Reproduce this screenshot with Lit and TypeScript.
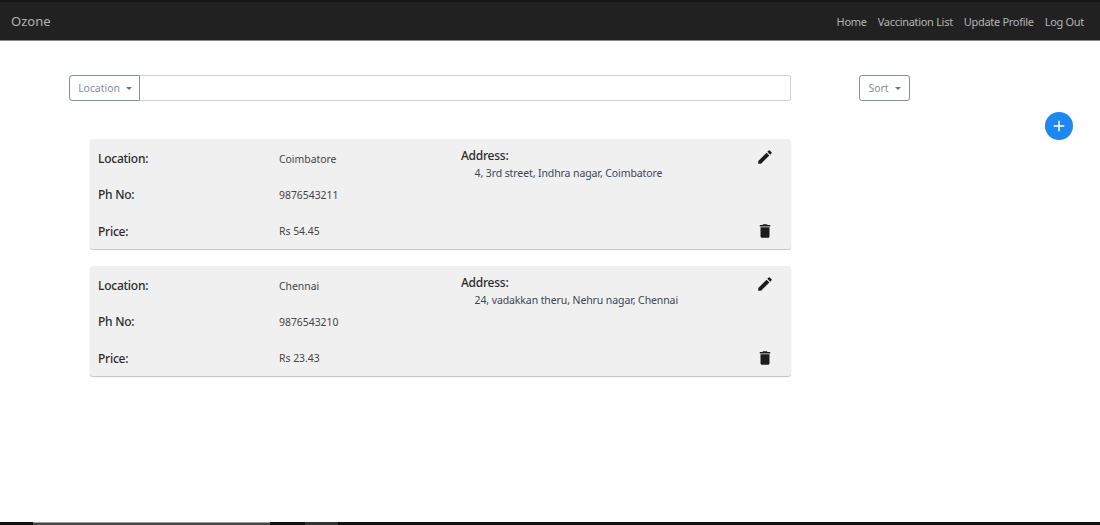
import { LitElement, html, css, svg } from "lit";
import { customElement } from "lit/decorators.js";

const caret = html`<span class="caret"></span>`;
const pencil = svg`<path d="M3 17.25V21h3.75L17.81 9.94l-3.75-3.75L3 17.25zM20.71 7.04a1 1 0 0 0 0-1.41l-2.34-2.34a1 1 0 0 0-1.41 0l-1.83 1.83 3.75 3.75 1.83-1.83z"/>`;
const trash = svg`<path d="M6 19c0 1.1.9 2 2 2h8c1.1 0 2-.9 2-2V7H6v12zM19 4h-3.5l-1-1h-5l-1 1H5v2h14V4z"/>`;

const items = [
  { location: "Coimbatore", phone: "9876543211", price: "Rs 54.45", address: "4, 3rd street, Indhra nagar, Coimbatore" },
  { location: "Chennai", phone: "9876543210", price: "Rs 23.43", address: "24, vadakkan theru, Nehru nagar, Chennai" },
];

@customElement("app-root")
export class AppRoot extends LitElement {
  static styles = css`
    :host {
      display: flex;
      flex-direction: column;
      height: 525px;
      overflow: hidden;
      background: #fff;
      font-family: "Noto Sans", "Open Sans", sans-serif;
      font-size: 11px;
      color: #343a40;
    }
    .nav {
      flex: none;
      height: 38px;
      box-sizing: content-box;
      display: flex;
      align-items: center;
      justify-content: space-between;
      padding: 0 16px 0 11px;
      background: #212121;
      border-top: 2px solid #161616;
      border-bottom: 1px solid #8a8a8a;
      color: #b4b4b4;
    }
    .brand { font-size: 13px; }
    .links { display: flex; gap: 11px; font-size: 11px; letter-spacing: -0.3px; }
    .main {
      flex: 1;
      position: relative;
      padding: 34px 0 0 69px;
    }
    .search { display: flex; width: 722px; height: 26px; }
    .drop {
      display: flex;
      align-items: center;
      justify-content: center;
      gap: 6px;
      box-sizing: border-box;
      border: 1px solid #868e96;
      height: 26px;
      font-size: 10.4px;
      color: #868e96;
      background: #fff;
    }
    .drop.loc { width: 71px; border-radius: 3px 0 0 3px; padding-left: 1px; }
    .input {
      flex: 1;
      box-sizing: border-box;
      border: 1px solid #ced4da;
      border-left: none;
      border-radius: 0 3px 3px 0;
    }
    .drop.sort { width: 51px; border-radius: 3px; margin-left: 68px; }
    .caret {
      width: 0;
      height: 0;
      border-left: 3.5px solid transparent;
      border-right: 3.5px solid transparent;
      border-top: 3.5px solid #6c757d;
    }
    .toolbar { display: flex; }
    .fab {
      position: absolute;
      left: 1045px;
      top: 71px;
      width: 28px;
      height: 28px;
      border-radius: 50%;
      background: #1e88f0;
      display: flex;
      align-items: center;
      justify-content: center;
    }
    .fab svg { width: 18px; height: 18px; fill: #fff; }
    .cards {
      display: flex;
      flex-direction: column;
      gap: 17px;
      width: 701px;
      margin: 38px 0 0 21px;
    }
    .card {
      height: 110px;
      box-sizing: border-box;
      background: #f0f0f0;
      border-radius: 3px;
      box-shadow: 0 1px 1px rgba(0, 0, 0, 0.24);
      display: grid;
      grid-template-columns: 181px 182px 1fr 40px;
      padding: 0 0 0 8px;
    }
    .col { display: flex; flex-direction: column; padding-top: 12px; }
    .row { height: 36px; flex: none; display: flex; align-items: flex-start; line-height: 16px; }
    .row:last-child { height: 16px; }
    .row.label:nth-child(2) { height: 37px; }
    .label { font-size: 12px; letter-spacing: -0.25px; font-weight: 500; color: #2b2b2b; }
    .value { font-size: 10.4px; color: #444; }
    .addr { padding-top: 9px; }
    .addr .label { line-height: 16px; }
    .addr .text {
      font-size: 10.5px;
      letter-spacing: -0.1px;
      line-height: 16px;
      margin-top: 1px;
      padding-left: 13.5px;
      color: #3d4650;
    }
    .icons {
      display: flex;
      flex-direction: column;
      justify-content: space-between;
      align-items: flex-start;
      padding: 9px 0;
    }
    .icons svg { width: 18px; height: 18px; fill: #1c1c1c; display: block; margin-left: 5px; }
    .strip { flex: none; height: 3px; display: flex; background: #111; }
    .strip span:nth-child(1) { width: 33px; }
    .strip span:nth-child(2) { width: 237px; background: #474747; border-top: 1px solid #999; box-sizing: border-box; }
    .strip span:nth-child(3) { width: 35px; }
    .strip span:nth-child(4) { width: 33px; background: #333; }
  `;

  render() {
    return html`
      <div class="nav">
        <span class="brand">Ozone</span>
        <div class="links">
          <span>Home</span><span>Vaccination List</span><span>Update Profile</span><span>Log Out</span>
        </div>
      </div>
      <div class="main">
        <div class="toolbar">
          <div class="search">
            <div class="drop loc">Location ${caret}</div>
            <div class="input"></div>
          </div>
          <div class="drop sort">Sort ${caret}</div>
        </div>
        <div class="fab">
          <svg viewBox="0 0 24 24"><path d="M19 13h-6v6h-2v-6H5v-2h6V5h2v6h6v2z"/></svg>
        </div>
        <div class="cards">
          ${items.map(
            (i) => html`
              <div class="card">
                <div class="col">
                  <div class="row label">Location:</div>
                  <div class="row label">Ph No:</div>
                  <div class="row label">Price:</div>
                </div>
                <div class="col">
                  <div class="row value">${i.location}</div>
                  <div class="row value">${i.phone}</div>
                  <div class="row value">${i.price}</div>
                </div>
                <div class="col addr">
                  <div class="label">Address:</div>
                  <div class="text">${i.address}</div>
                </div>
                <div class="icons">
                  <svg viewBox="0 0 24 24">${pencil}</svg>
                  <svg viewBox="0 0 24 24">${trash}</svg>
                </div>
              </div>
            `
          )}
        </div>
      </div>
      <div class="strip"><span></span><span></span><span></span><span></span></div>
    `;
  }
}
